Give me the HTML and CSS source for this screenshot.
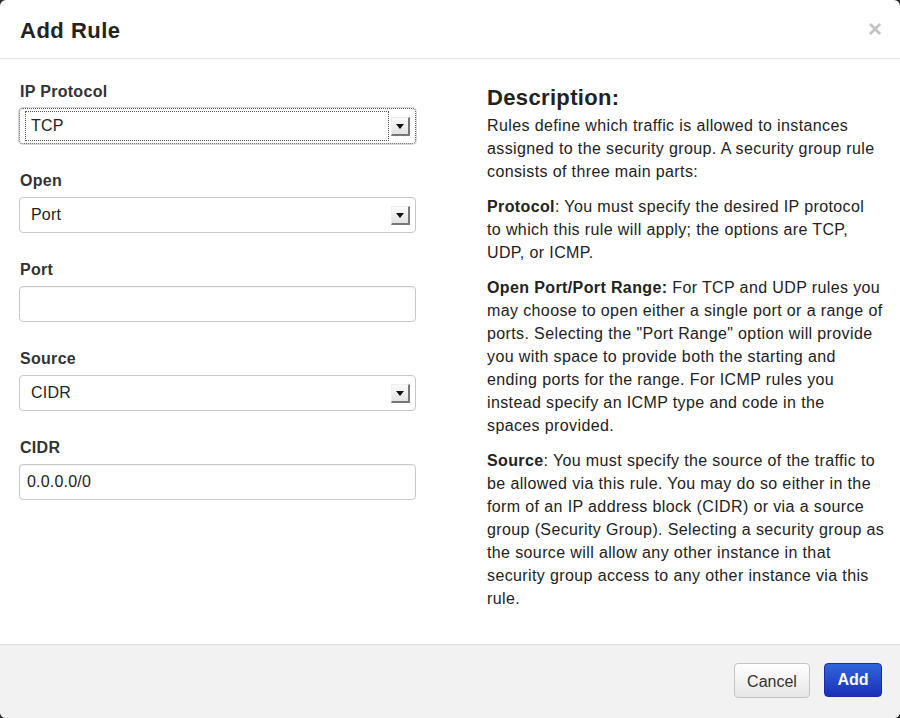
FILE: index.html
```html
<!DOCTYPE html>
<html>
<head>
<meta charset="utf-8">
<link rel="stylesheet" href="styles.css">
</head>
<body>
<div class="modal">
  <div class="modal-header">
    <h3 class="title">Add Rule</h3>
    <span class="close">&times;</span>
  </div>
  <div class="modal-body">
    <div class="form-col">
      <div class="group">
        <label class="label">IP Protocol</label>
        <div class="select focused">
          <span class="select-text">TCP</span>
          <span class="arrow"><span class="tri"></span></span>
        </div>
      </div>
      <div class="group">
        <label class="label">Open</label>
        <div class="select">
          <span class="select-text">Port</span>
          <span class="arrow"><span class="tri"></span></span>
        </div>
      </div>
      <div class="group">
        <label class="label">Port</label>
        <input class="input" type="text" value="">
      </div>
      <div class="group">
        <label class="label">Source</label>
        <div class="select">
          <span class="select-text">CIDR</span>
          <span class="arrow"><span class="tri"></span></span>
        </div>
      </div>
      <div class="group">
        <label class="label">CIDR</label>
        <input class="input" type="text" value="0.0.0.0/0">
      </div>
    </div>
    <div class="desc-col">
      <h3 class="desc-title">Description:</h3>
      <p>Rules define which traffic is allowed to instances assigned to the security group. A security group rule consists of three main parts:</p>
      <p><strong>Protocol</strong>: You must specify the desired IP protocol<br>to which this rule will apply; the options are TCP, UDP, or ICMP.</p>
      <p><strong>Open Port/Port Range:</strong> For TCP and UDP rules you may choose to open either a single port or a range of ports. Selecting the "Port Range" option will provide you with space to provide both the starting and ending ports for the range. For ICMP rules you instead specify an ICMP type and code in the<br>spaces provided.</p>
      <p><strong>Source</strong>: You must specify the source of the traffic to be allowed via this rule. You may do so either in the form of an IP address block (CIDR) or via a source group (Security Group). Selecting a security group as the source will allow any other instance in that security group access to any other instance via this rule.</p>
    </div>
  </div>
  <div class="modal-footer">
    <button class="btn btn-cancel">Cancel</button>
    <button class="btn btn-primary">Add</button>
  </div>
</div>
</body>
</html>
```

FILE: styles.css
```css
* { box-sizing: border-box; }
html, body { margin: 0; padding: 0; height: 100%; }
body {
  background: #2a2a2a;
  font-family: "Liberation Sans", Arial, sans-serif;
  color: #222;
}
.modal {
  width: 900px;
  height: 718px;
  background: #fff;
  border-radius: 6px;
  display: flex;
  flex-direction: column;
  overflow: hidden;
}
.modal-header {
  height: 59px;
  border-bottom: 1px solid #e5e5e5;
  display: flex;
  align-items: center;
  justify-content: space-between;
  padding: 0 18px 0 20px;
  flex: none;
}
.title {
  margin: 0;
  font-size: 22px;
  font-weight: bold;
  letter-spacing: 0.5px;
  color: #222;
  line-height: 26px;
  padding-top: 4px;
}
.close {
  font-size: 24px;
  font-weight: bold;
  color: #c4c4c4;
  line-height: 20px;
  margin-top: 0;
}
.modal-body {
  flex: 1;
  display: flex;
  padding: 22px 15px 0 20px;
}
.form-col {
  width: 397px;
  flex: none;
  margin-left: -1px;
}
.group {
  margin-bottom: 26px;
}
.label {
  display: block;
  font-size: 16px;
  font-weight: bold;
  letter-spacing: 0.3px;
  color: #333;
  line-height: 20px;
  padding-top: 1px;
  margin-bottom: 6px;
  padding-left: 1px;
}
.select {
  position: relative;
  height: 36px;
  border: 1px solid #c8c8c8;
  border-radius: 4px;
  background: #fff;
  display: flex;
  align-items: center;
  padding-left: 11px;
  font-size: 16px;
  letter-spacing: 0.2px;
  color: #222;
}
.select.focused {
  border: 1px dotted #555;
  box-shadow: 0 0 0 1px #d8d8d8;
}
.select.focused .select-text {
  position: absolute;
  left: 5px;
  top: 2px;
  bottom: 2px;
  right: 26px;
  border: 1px dotted #555;
  display: flex;
  align-items: center;
  padding-left: 5px;
}
.arrow {
  position: absolute;
  right: 5px;
  top: 8px;
  width: 19px;
  height: 19px;
  background: linear-gradient(#fbfbfb, #e2e2e2);
  border-right: 2px solid #777;
  border-bottom: 2px solid #777;
  border-left: 1px solid #eee;
  border-top: 1px solid #eee;
  display: flex;
  align-items: center;
  justify-content: center;
}
.tri {
  width: 0;
  height: 0;
  border-left: 4px solid transparent;
  border-right: 4px solid transparent;
  border-top: 5px solid #111;
}
.input {
  display: block;
  width: 100%;
  height: 36px;
  border: 1px solid #c8c8c8;
  border-radius: 4px;
  font-family: "Liberation Sans", Arial, sans-serif;
  font-size: 16px;
  letter-spacing: 0.2px;
  color: #222;
  padding: 0 8px 0 7px;
  background: #fff;
  box-shadow: inset 0 1px 1px rgba(0,0,0,0.05);
}
.desc-col {
  margin-left: 71px;
  flex: 1;
  font-size: 16px;
  letter-spacing: 0.38px;
  line-height: 23px;
  color: #222;
}
.desc-title {
  margin: 5px 0 4px;
  font-size: 22px;
  letter-spacing: 0.35px;
  font-weight: bold;
  line-height: 24px;
  color: #222;
}
.desc-col p {
  margin: 0 0 12px;
}
.desc-col strong { color: #222; }
.modal-footer {
  flex: none;
  height: 74px;
  border-top: 1px solid #dcdcdc;
  background: #f2f2f2;
  display: flex;
  justify-content: flex-end;
  align-items: flex-start;
  padding: 18px 18px 0 0;
  gap: 14px;
}
.btn {
  height: 35px;
  border-radius: 4px;
  font-family: "Liberation Sans", Arial, sans-serif;
  font-size: 16px;
  padding: 0 6px;
  cursor: pointer;
}
.btn-cancel {
  width: 76px;
  background: linear-gradient(#ffffff, #e6e6e6);
  border: 1px solid #c4c4c4;
  color: #333;
  padding-top: 3px;
}
.btn-primary {
  width: 58px;
  background: linear-gradient(#2f66d9, #1b2fb8);
  border: 1px solid #1a2ba8;
  color: #fff;
  font-weight: bold;
  font-size: 16px;
  height: 34px;
}
```
